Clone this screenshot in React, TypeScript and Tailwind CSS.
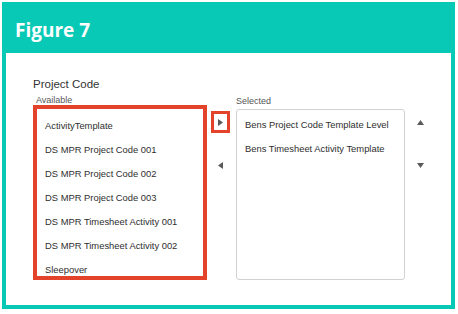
import React from "react";

const leftItems = [
  "ActivityTemplate",
  "DS MPR Project Code 001",
  "DS MPR Project Code 002",
  "DS MPR Project Code 003",
  "DS MPR Timesheet Activity 001",
  "DS MPR Timesheet Activity 002",
  "Sleepover",
];

const rightItems = ["Bens Project Code Template Level", "Bens Timesheet Activity Template"];

function Tri({ dir }: { dir: "right" | "left" | "up" | "down" }) {
  if (dir === "right")
    return (
      <svg width="5" height="7" viewBox="0 0 5 7">
        <polygon points="0,0 5,3.5 0,7" fill="#5a5a5a" />
      </svg>
    );
  if (dir === "left")
    return (
      <svg width="5" height="7" viewBox="0 0 5 7">
        <polygon points="5,0 0,3.5 5,7" fill="#5a5a5a" />
      </svg>
    );
  if (dir === "up")
    return (
      <svg width="7" height="5" viewBox="0 0 7 5">
        <polygon points="0,5 3.5,0 7,5" fill="#5a5a5a" />
      </svg>
    );
  return (
    <svg width="7" height="5" viewBox="0 0 7 5">
      <polygon points="0,0 7,0 3.5,5" fill="#5a5a5a" />
    </svg>
  );
}

export default function App() {
  return (
    <div className="w-[458px] h-[314px] bg-white p-[2px]" style={{ fontFamily: '"Liberation Sans", Arial, sans-serif' }}>
      <div className="w-[453px] h-[307px] border-4 border-[#07c9b5] bg-white flex flex-col">
        <div className="h-[47px] bg-[#07c9b5] pl-[9px] pt-[11px]">
          <div
            className="text-white font-bold text-[19px] leading-[26px]"
            style={{ fontFamily: '"Open Sans", sans-serif' }}
          >
            Figure 7
          </div>
        </div>
        <div className="flex-1 pl-[27px] pt-[24px]">
          <div className="text-[11.5px] leading-[14px] text-[#333]">Project Code</div>
          <div className="mt-[5px] flex items-start">
            {/* Available */}
            <div className="w-[174px] flex flex-col">
              <div className="pl-[3px] text-[9px] leading-[9px] text-[#555]">Available</div>
              <div className="h-[175px] border-4 border-[#e3432b] bg-white pt-[5px] pl-[8px]">
                {leftItems.map((t) => (
                  <div key={t} className="h-[24px] flex items-center text-[9.4px] text-[#2e2e2e] whitespace-nowrap">
                    {t}
                  </div>
                ))}
              </div>
            </div>
            {/* move buttons */}
            <div className="ml-[4px] w-[19px] flex flex-col">
              <div className="mt-[15px] h-[22px] border-[3px] border-[#e3432b] flex items-center justify-center">
                <Tri dir="right" />
              </div>
              <div className="mt-[21px] h-[22px] flex items-center justify-center">
                <Tri dir="left" />
              </div>
            </div>
            {/* Selected */}
            <div className="ml-[6px] w-[169px] flex flex-col">
              <div className="mt-[1px] text-[9px] leading-[9px] text-[#555]">Selected</div>
              <div className="mt-[3px] h-[171px] border border-[#d2d2d2] rounded-[3px] bg-white pt-[3px] pl-[8px]">
                {rightItems.map((t) => (
                  <div key={t} className="h-[24px] flex items-center text-[9.4px] text-[#2e2e2e] whitespace-nowrap">
                    {t}
                  </div>
                ))}
              </div>
            </div>
            {/* order buttons */}
            <div className="ml-[5px] w-[20px] flex flex-col">
              <div className="mt-[15px] h-[22px] flex items-center justify-center">
                <Tri dir="up" />
              </div>
              <div className="mt-[21px] h-[22px] flex items-center justify-center">
                <Tri dir="down" />
              </div>
            </div>
          </div>
        </div>
      </div>
    </div>
  );
}
